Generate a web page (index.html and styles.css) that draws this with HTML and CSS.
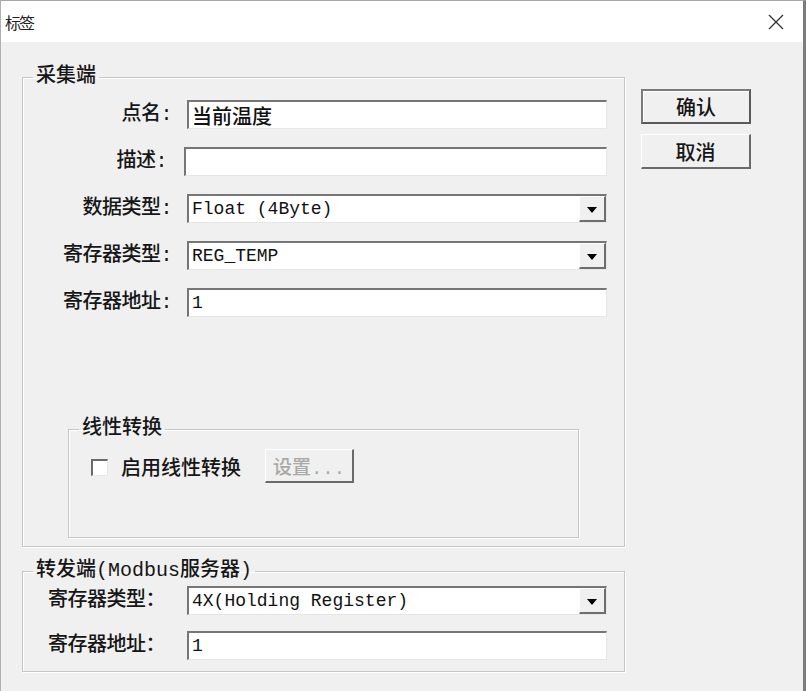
FILE: index.html
```html
<!DOCTYPE html>
<html lang="zh-CN">
<head>
<meta charset="utf-8">
<title>标签</title>
<link rel="stylesheet" href="styles.css">
</head>
<body>
<div class="window">
  <div class="titlebar">
    <span class="title">标签</span>
    <svg class="close" width="16" height="16" viewBox="0 0 16 16"><path d="M1 1 L15 15 M15 1 L1 15" stroke="#333" stroke-width="1.3" fill="none"/></svg>
  </div>
  <div class="body">
    <div class="left">
      <fieldset class="group group-collect">
        <legend>采集端</legend>
        <div class="form form-collect">
          <label class="lbl">点名:</label>
          <div class="field"><span class="val cjk">当前温度</span></div>
          <label class="lbl lbl-shift">描述:</label>
          <div class="field field-shift"></div>
          <label class="lbl">数据类型:</label>
          <div class="field select"><span class="val">Float (4Byte)</span><span class="drop"><i class="tri"></i></span></div>
          <label class="lbl">寄存器类型:</label>
          <div class="field select"><span class="val">REG_TEMP</span><span class="drop"><i class="tri"></i></span></div>
          <label class="lbl">寄存器地址:</label>
          <div class="field"><span class="val">1</span></div>
        </div>
        <fieldset class="group group-linear">
          <legend>线性转换</legend>
          <div class="linear-row">
            <span class="check"></span>
            <span class="check-label">启用线性转换</span>
            <span class="btn btn-disabled">设置...</span>
          </div>
        </fieldset>
      </fieldset>
      <fieldset class="group group-forward">
        <legend>转发端(Modbus服务器)</legend>
        <div class="form form-forward">
          <label class="lbl lbl-left">寄存器类型：</label>
          <div class="field select"><span class="val">4X(Holding Register)</span><span class="drop"><i class="tri"></i></span></div>
          <label class="lbl lbl-left">寄存器地址：</label>
          <div class="field"><span class="val">1</span></div>
        </div>
      </fieldset>
    </div>
    <div class="right">
      <span class="btn btn-default">确认</span>
      <span class="btn">取消</span>
    </div>
  </div>
</div>
</body>
</html>
```

FILE: styles.css
```css
* { box-sizing: border-box; }
html, body {
  margin: 0;
  padding: 0;
  background: #f0f0f0;
}
body {
  font-family: "Liberation Mono", "Noto Sans CJK SC", monospace;
  font-weight: 500;
  color: #161616;
}
.window {
  width: 806px;
  height: 691px;
  background: #f0f0f0;
  border-top: 1px solid #a8a8a8;
  border-left: 1px solid #b0b0b0;
  border-right: 3px solid #7c7c7c;
  overflow: hidden;
}
.titlebar {
  height: 41px;
  background: #ffffff;
  display: flex;
  align-items: center;
  justify-content: space-between;
  padding: 0 19px 0 4px;
}
.title {
  font-family: "Noto Sans CJK SC", sans-serif;
  font-weight: 400;
  font-size: 16px;
  color: #222;
  letter-spacing: -2px;
}
.body {
  display: flex;
  align-items: flex-start;
  padding-top: 24px;
}
.left {
  display: flex;
  flex-direction: column;
  margin-left: 21px;
}
.group {
  margin: 0;
  padding: 0;
  min-width: 0;
  border: 1px solid #c6c6c6;
  box-shadow: 1px 1px 0 #ffffff, inset 1px 1px 0 #ffffff;
}
.group legend {
  margin-left: 10px;
  padding: 0 3px;
  font-size: 20px;
  line-height: 22px;
  color: #161616;
}
.group-collect {
  width: 603px;
  padding-bottom: 8px;
}
.form {
  display: grid;
  grid-template-columns: 149px 420px;
  column-gap: 15px;
  align-items: center;
}
.form-collect {
  padding-top: 12px;
  row-gap: 18px;
  grid-auto-rows: 29px;
}
.lbl {
  font-size: 20px;
  text-align: right;
  line-height: 29px;
  white-space: nowrap;
  letter-spacing: -0.5px;
}
.lbl-shift {
  margin-right: 5px;
}
.field {
  height: 29px;
  background: #ffffff;
  border-top: 2px solid #767676;
  border-left: 2px solid #767676;
  border-bottom: 1px solid #e6e6e6;
  border-right: 1px solid #e6e6e6;
  display: flex;
  align-items: center;
  padding-left: 3px;
}
.field-shift {
  margin-left: -3px;
}
.val {
  font-family: "Liberation Mono", "Noto Sans CJK SC", monospace;
  font-weight: 400;
  font-size: 18px;
  color: #111;
  flex: 1;
  white-space: nowrap;
}
.val.cjk {
  font-family: "Noto Sans CJK SC", sans-serif;
  font-weight: 500;
  font-size: 20px;
}
.select {
  padding-right: 0;
}
.drop {
  width: 27px;
  align-self: stretch;
  background: #f0f0f0;
  border-top: 1px solid #ffffff;
  border-left: 1px solid #ffffff;
  border-right: 2px solid #6e6e6e;
  border-bottom: 2px solid #6e6e6e;
  display: flex;
  align-items: center;
  justify-content: center;
}
.tri {
  width: 0;
  height: 0;
  border-left: 5px solid transparent;
  border-right: 5px solid transparent;
  border-top: 6px solid #000;
  margin-top: 3px;
}
.group-linear {
  width: 511px;
  margin-top: 101px;
  margin-left: 45px;
  padding-bottom: 54px;
}
.linear-row {
  display: flex;
  align-items: center;
  padding-top: 9px;
  padding-left: 22px;
}
.check {
  width: 17px;
  height: 17px;
  background: #ffffff;
  border-top: 2px solid #6a6a6a;
  border-left: 2px solid #6a6a6a;
  border-bottom: 1px solid #e6e6e6;
  border-right: 1px solid #e6e6e6;
  margin-top: 2px;
}
.check-label {
  font-size: 20px;
  margin-left: 13px;
}
.btn {
  display: flex;
  align-items: center;
  justify-content: center;
  background: #f0f0f0;
  border-top: 1px solid #ffffff;
  border-left: 1px solid #ffffff;
  border-right: 2px solid #6a6a6a;
  border-bottom: 2px solid #6a6a6a;
  font-size: 20px;
  color: #161616;
}
.btn-disabled {
  width: 89px;
  height: 34px;
  margin-left: 24px;
  color: #a8a8a8;
  font-size: 19px;
}
.group-forward {
  width: 603px;
  margin-top: 13px;
}
.form-forward {
  grid-template-columns: 139px 420px;
  column-gap: 0;
  padding: 4px 0 11px 25px;
  row-gap: 16px;
  grid-auto-rows: 29px;
}
.lbl-left {
  text-align: left;
}
.right {
  display: flex;
  flex-direction: column;
  gap: 10px;
  margin-left: 16px;
  margin-top: 23px;
}
.right .btn {
  width: 110px;
  height: 35px;
}
.btn-default {
  border: 2px solid #5a5a5a;
  border-top-color: #7a7a7a;
  border-left-color: #7a7a7a;
  box-shadow: inset 1px 1px 0 #ffffff;
}
```
